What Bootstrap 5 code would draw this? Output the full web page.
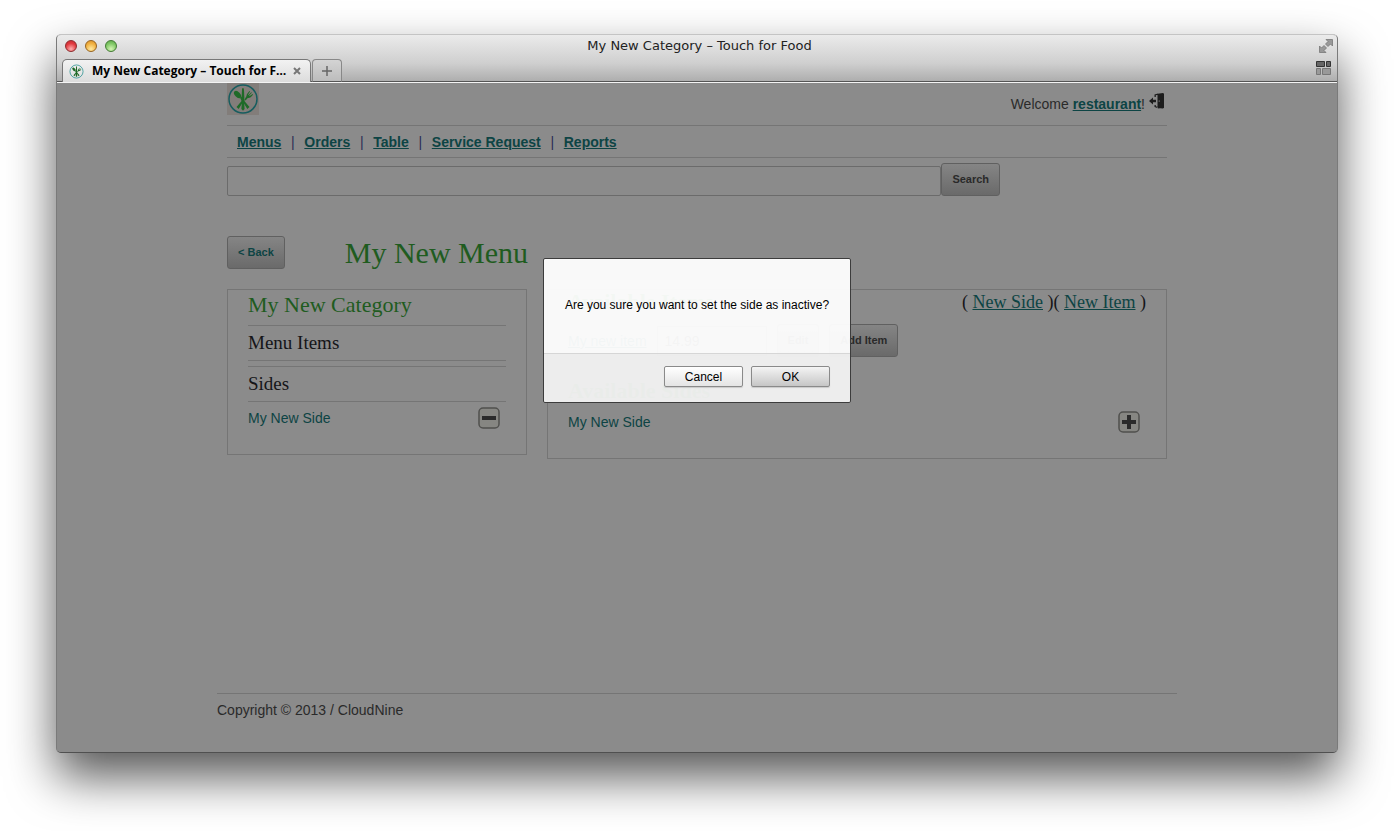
<!DOCTYPE html>
<html lang="en">
<head>
<meta charset="utf-8">
<meta name="viewport" content="width=device-width, initial-scale=1">
<title>My New Category – Touch for Food</title>
<link href="https://cdn.jsdelivr.net/npm/bootstrap@5.3.0/dist/css/bootstrap.min.css" rel="stylesheet">
<style>
  :root { --rule: #757575; --teal: #0d4444; --leaf: #1f5c1f; }
  body { min-height: 100vh; padding: 34px 56px 78px; background: #fff; font-family: "Liberation Sans", Arial, sans-serif; font-size: 14px; line-height: 20px; color: #2a2a2a; }
  a { color: var(--teal); }
  a:hover { color: #062c2c; }
  .browser { border: 1px solid #7a7a7a; border-top-color: #c4c4c4; border-bottom-color: #505050; border-radius: 5px; box-shadow: 0 24px 48px rgba(0,0,0,.66); overflow: hidden; background: #8b8b8b; }
  .chrome { height: 48px; background: linear-gradient(#ebebeb, #cfcfcf 60%, #acacac); border-bottom: 1px solid #f4f4f4; box-shadow: inset 0 -1px #555; color: #222; }
  .title-row { height: 22px; padding: 0 3px 0 8px; }
  .light { width: 12px; height: 12px; border-radius: 50%; border: 1px solid; padding: 0; }
  .light-red { background: radial-gradient(circle at 50% 80%, #ffb0b0, #e0393e 60%, #c62a30); border-color: #8c2a2c; }
  .light-amber { background: radial-gradient(circle at 50% 80%, #ffeaa0, #f0b040 60%, #d98f28); border-color: #96631f; }
  .light-green { background: radial-gradient(circle at 50% 80%, #d5f5b5, #7fc765 60%, #5aa548); border-color: #427a33; }
  .window-title { font-family: "DejaVu Sans", sans-serif; font-size: 13px; }
  .lights, .title-end { width: 60px; }
  .tab-row { height: 25px; padding: 0 6px 0 5px; }
  .page-tab { width: 249px; height: 23px; padding: 0 9px 0 6px; background: linear-gradient(#f2f2f2, #dcdcdc); border: 1px solid #777; border-bottom: 0; border-radius: 5px 5px 0 0; }
  .tab-label { font-size: 12px; font-weight: 700; color: #000; font-family: "Open Sans", sans-serif; }
  .bare { border: 0; background: none; padding: 0; line-height: 0; }
  .add-tab { width: 30px; height: 23px; margin-left: 1px; padding: 0; line-height: 0; background: linear-gradient(#d4d4d4, #bcbcbc); border: 1px solid #888; border-bottom-color: #555; border-radius: 4px 4px 0 0; }
  .viewport-area { background: #8b8b8b; }
  .site { width: 100%; max-width: 960px; padding: 0 10px; }
  .masthead { height: 43px; border-bottom: 1px solid var(--rule); }
  .logo-box { width: 32px; height: 32px; background: #827d7a; }
  .welcome { padding: 11px 2px 0 0; gap: 4px; }
  .exit-icon { margin-top: -1px; }
  .site-nav { height: 32px; padding: 0 10px; border-bottom: 1px solid var(--rule); font-weight: 700; }
  .site-nav .sep { font-weight: 400; color: #2b2b55; width: 23px; text-align: center; }
  .search-bar { padding-top: 5px; }
  .search-box { width: 76%; height: 30px; margin-top: 3px; background: transparent; border: 1px solid #6b6b6b; border-radius: 2px; padding: 4px; }
  .push { height: 33px; padding: 0 10px; font-size: 11px; font-weight: 700; color: #2a2a2a; background: linear-gradient(#858585, #6a6a6a); border: 1px solid #606060; border-radius: 3px; line-height: 31px; white-space: nowrap; }
  .push-link { color: var(--teal); text-decoration: none; display: inline-block; }
  .heading-row { padding-top: 40px; gap: 60px; margin-bottom: 20px; }
  h1, h2, h3, .serif { font-family: "Liberation Serif", Georgia, serif; font-weight: 400; margin: 0; }
  h1 { font-size: 30px; line-height: 32px; color: var(--leaf); }
  .cat-title { font-size: 22px; line-height: 30px; color: var(--leaf); padding-bottom: 5px; }
  .panel { border: 1px solid var(--rule); padding: 0 20px 25px; }
  .ruled { font-size: 19px; line-height: 24px; padding: 5px 0; border-top: 1px solid var(--rule); border-bottom: 1px solid var(--rule); color: #151518; }
  .ruled + .ruled { margin-top: 5px; }
  .plain-link { text-decoration: none; }
  .side-row { padding-top: 5px; }
  .side-mark { margin-right: 6px; }
  .actions { font-size: 18px; line-height: 24px; color: #151518; }
  .avail { font-size: 22px; line-height: 24px; color: var(--leaf); font-weight: 700; }
  .item-row { padding: 10px 0 22px; gap: 10px; }
  .price { width: 110px; height: 30px; background: transparent; border: 1px solid #6b6b6b; padding: 4px 7px; color: #2a2a2a; }
  .site-footer { width: 100%; max-width: 960px; height: 59px; border-top: 1px solid var(--rule); padding-top: 6px; }
  .veil { position: absolute; inset: 0; padding-top: 175px; pointer-events: none; }
  .confirm { width: 308px; border: 1px solid #3c3c3c; border-radius: 2px; background: rgba(255,255,255,.95); pointer-events: auto; color: #000; font-size: 12px; }
  .confirm-text { height: 94px; padding-top: 36px; margin: 0; }
  .confirm-foot { height: 49px; padding: 12px 20px 0; gap: 8px; border-top: 1px solid #d6d6d6; background: rgba(215,215,215,.35); }
  .confirm-btn { width: 79px; height: 21px; padding: 0; line-height: 18px; border: 1px solid #8a8a8a; border-radius: 2px; background: linear-gradient(#fff, #e4e4e4); box-shadow: 0 1px 1px rgba(0,0,0,.15); color: #000; }
  .confirm-main { background: linear-gradient(#f4f4f4, #c6c6c6); }
</style>
</head>
<body class="d-flex flex-column">
<svg width="0" height="0" class="position-absolute" aria-hidden="true">
  <symbol id="utensils" viewBox="0 0 32 32">
    <circle cx="16" cy="16" r="14" fill="none" stroke="currentColor" stroke-width="1.5"/>
    <g fill="#1f6a28">
      <path d="M15 6c.3-1.500 1.600-1.500 1.900 0l.6 12h-3z"/>
      <ellipse cx="10.500" cy="11.500" rx="2.600" ry="4.400" transform="rotate(-42 10.500 11.500)"/>
      <path d="M13 14.800l1.500-1.300 2.500 4.500-1 2zM15.500 18l1.500-.5 5.500 6.500-2.200 2zM16.500 18l-1.500-.5L9.500 24l2.200 2z"/>
      <path d="M17.500 16.500l2-3.500c0-1.500 1-3 3-5l.6.500-2 3 .5.500 2.600-2.800.6.600-2.600 2.800.5.500 2.900-2.200.5.600c-1.800 2.600-3.500 3.800-5.300 3.500l-2.300 2.500z"/>
      <path d="M15 17h2l.6 9-1.600 1.800-1.600-1.800z"/>
    </g>
  </symbol>
</svg>
<div class="browser d-flex flex-column flex-grow-1">
  <header class="chrome flex-shrink-0">
    <div class="title-row d-flex align-items-center justify-content-between">
      <div class="lights d-flex gap-2">
        <button class="light light-red" type="button" aria-label="Close"></button>
        <button class="light light-amber" type="button" aria-label="Minimise"></button>
        <button class="light light-green" type="button" aria-label="Zoom"></button>
      </div>
      <div class="window-title">My New Category – Touch for Food</div>
      <div class="title-end d-flex justify-content-end">
        <button class="bare" type="button" aria-label="Full screen"><svg width="16" height="16" viewBox="0 0 16 16" fill="#999" stroke="#777" stroke-width=".8"><path d="M8 1.500h6.500V8l-2-2-2.500 2.500L7.500 6 10 3.500zM1.500 8l2 2L6 7.500 8.500 10 6 12.500l2 2H1.500z"/></svg></button>
      </div>
    </div>
    <div class="tab-row d-flex align-items-end">
      <div class="page-tab d-flex align-items-center">
        <svg class="flex-shrink-0 me-2" width="15" height="15" color="#188a8a"><use href="#utensils"/></svg>
        <span class="tab-label flex-grow-1 text-nowrap">My New Category – Touch for F…</span>
        <button class="bare" type="button" aria-label="Close tab"><svg width="8" height="8" viewBox="0 0 8 8" stroke="#777" stroke-width="2"><path d="M1 1l6 6M7 1L1 7"/></svg></button>
      </div>
      <button class="add-tab flex-shrink-0" type="button" aria-label="New tab"><svg width="10" height="10" viewBox="0 0 10 10" stroke="#666" stroke-width="1.500"><path d="M5 0v10M0 5h10"/></svg></button>
      <button class="bare ms-auto align-self-center" type="button" aria-label="Tab groups"><svg class="d-block mb-1" width="15" height="14" viewBox="0 0 15 14"><g fill="#666" stroke="#333"><path d="M.5.500h8v5h-8zM10.500.500h4v5h-4z"/></g><g fill="#999" stroke="#777"><path d="M.5 7.500h4v6h-4zM6.500 7.500h8v6h-8z"/></g></svg></button>
    </div>
  </header>

  <div class="viewport-area flex-grow-1 position-relative d-flex flex-column">
    <div class="site mx-auto">
      <div class="masthead d-flex justify-content-between align-items-start">
        <a class="logo-box d-block" href="#" aria-label="Touch for Food"><svg class="d-block" width="32" height="32" color="#175d5f"><use href="#utensils"/></svg></a>
        <div class="welcome d-flex">
          <span>Welcome <a class="fw-bold" href="#">restaurant</a>!</span>
          <a class="exit-icon" href="#" aria-label="Log out"><svg class="d-block" width="16" height="16" viewBox="0 0 16 16" fill="#1c1c1c"><path d="M0 8l4-3.500v2.300h3v2.400H4v2.300zM5.500 4V1.500L9 .500v1.200L6.800 2.300V4zM5.500 12v2l3.500 1.200V14l-2.200-.8V12zM8.500.800L14 0l1 .800v14L14 15.500 8.500 15z"/><circle cx="10.200" cy="8" r=".6" fill="#aaa"/></svg></a>
        </div>
      </div>
      <nav class="site-nav d-flex align-items-center">
        <a href="#">Menus</a><span class="sep">|</span><a href="#">Orders</a><span class="sep">|</span><a href="#">Table</a><span class="sep">|</span><a href="#">Service Request</a><span class="sep">|</span><a href="#">Reports</a>
      </nav>
      <form class="search-bar d-flex align-items-start">
        <input class="search-box" type="text" aria-label="Search">
        <button class="push" type="submit">Search</button>
      </form>
      <div class="heading-row d-flex align-items-center">
        <a class="push push-link" href="#">&lt; Back</a>
        <h1>My New Menu</h1>
      </div>
      <div class="row align-items-start" style="--bs-gutter-x:20px">
        <div class="col-4">
          <section class="panel">
            <h2 class="cat-title">My New Category</h2>
            <h3 class="ruled">Menu Items</h3>
            <h3 class="ruled">Sides</h3>
            <div class="side-row d-flex justify-content-between align-items-center">
              <a class="plain-link" href="#">My New Side</a>
              <button class="bare side-mark" type="button" aria-label="Remove side"><svg width="22" height="22" viewBox="0 0 22 22"><rect x="1" y="1" width="20" height="20" rx="4" fill="#868682" stroke="#50504e" stroke-width="1.500"/><path d="M4 9h14v4H4z" fill="#2b2b2b"/></svg></button>
            </div>
          </section>
        </div>
        <div class="col-8">
          <section class="panel">
            <div class="d-flex justify-content-between">
              <h2 class="avail">Available Items</h2>
              <div class="actions serif">( <a href="#">New Side</a> )( <a href="#">New Item</a> )</div>
            </div>
            <div class="item-row d-flex align-items-center">
              <a href="#">My new item</a>
              <input class="price" type="text" value="14.99" aria-label="Price">
              <button class="push" type="button">Edit</button>
              <button class="push" type="button">Add Item</button>
            </div>
            <h2 class="avail">Available Sides</h2>
            <div class="side-row d-flex justify-content-between align-items-center pt-2">
              <a class="plain-link" href="#">My New Side</a>
              <button class="bare side-mark" type="button" aria-label="Add side"><svg width="22" height="22" viewBox="0 0 22 22"><rect x="1" y="1" width="20" height="20" rx="4" fill="#868682" stroke="#50504e" stroke-width="1.500"/><path d="M9 4h4v5h5v4h-5v5H9v-5H4V9h5z" fill="#2b2b2b"/></svg></button>
            </div>
          </section>
        </div>
      </div>
    </div>
    <footer class="site-footer mx-auto mt-auto">Copyright © 2013 / CloudNine</footer>

    <div class="veil d-flex justify-content-center align-items-start">
      <div class="confirm" role="alertdialog" aria-labelledby="confirmText">
        <p class="confirm-text text-center" id="confirmText">Are you sure you want to set the side as inactive?</p>
        <div class="confirm-foot d-flex justify-content-end align-items-start">
          <button class="confirm-btn" type="button">Cancel</button>
          <button class="confirm-btn confirm-main" type="button">OK</button>
        </div>
      </div>
    </div>
  </div>
</div>
<script src="https://cdn.jsdelivr.net/npm/bootstrap@5.3.0/dist/js/bootstrap.bundle.min.js"></script>
</body>
</html>
